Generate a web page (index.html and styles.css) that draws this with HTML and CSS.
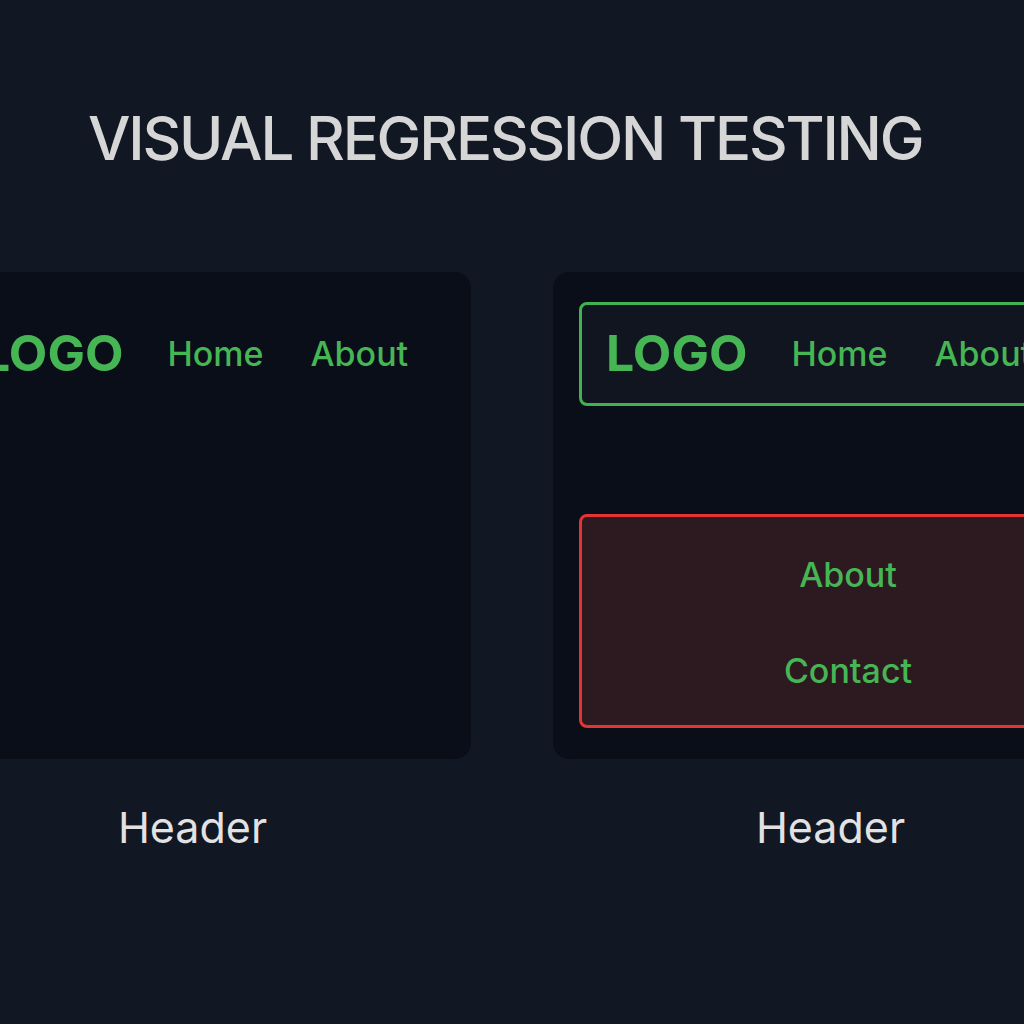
FILE: index.html
```html
<!DOCTYPE html>
<html>
<head>
<meta charset="utf-8">
<link rel="stylesheet" href="styles.css">
</head>
<body>
<main class="page">
  <h1 class="title">VISUAL REGRESSION TESTING</h1>
  <section class="compare">
    <div class="column">
      <div class="card">
        <nav class="nav nav-plain">
          <span class="logo">LOGO</span>
          <span class="link">Home</span>
          <span class="link">About</span>
        </nav>
      </div>
      <div class="label label-a">Header</div>
    </div>
    <div class="column">
      <div class="card">
        <nav class="nav nav-ok">
          <span class="logo">LOGO</span>
          <span class="link">Home</span>
          <span class="link">About</span>
        </nav>
        <div class="diff">
          <span class="link">About</span>
          <span class="link">Contact</span>
        </div>
      </div>
      <div class="label label-b">Header</div>
    </div>
  </section>
</main>
</body>
</html>
```

FILE: styles.css
```css
html, body {
  margin: 0;
  padding: 0;
  background: #111723;
  overflow: hidden;
}
body {
  width: 1024px;
  height: 1024px;
  font-family: Inter, "Noto Sans", sans-serif;
}
.page {
  display: flex;
  flex-direction: column;
}
.title {
  margin: 0;
  padding: 104px 0 0 88px;
  height: 170px;
  box-sizing: border-box;
  font-size: 60px;
  font-weight: 500;
  line-height: 1.15;
  color: #d6d6d6;
  white-space: nowrap;
  letter-spacing: -2.2px;
}
.compare {
  display: flex;
  gap: 82px;
  margin-left: -71px;
  margin-top: 102px;
}
.column {
  display: flex;
  flex-direction: column;
  align-items: center;
  width: 542px;
  flex-shrink: 0;
}
.card {
  width: 542px;
  height: 487px;
  box-sizing: border-box;
  background: #0a0e19;
  border-radius: 16px;
  padding: 30px 26px;
  display: flex;
  flex-direction: column;
}
.nav {
  display: flex;
  align-items: center;
  gap: 44px;
  height: 104px;
  box-sizing: border-box;
  padding-left: 24px;
  padding-bottom: 2px;
  border: 3px solid transparent;
  border-radius: 8px;
}
.nav .link + .link {
  margin-left: 3px;
}
.nav-ok {
  border-color: #3fb44e;
  background: #10151f;
  width: 600px;
  flex-shrink: 0;
}
.logo {
  font-size: 50px;
  font-weight: 700;
  color: #46b655;
  letter-spacing: 0;
}
.link {
  font-size: 34px;
  font-weight: 500;
  color: #46b655;
}
.diff {
  margin-top: 108px;
  width: 600px;
  height: 214px;
  box-sizing: border-box;
  border: 3px solid #e63434;
  border-radius: 8px;
  background: #2d1a21;
  display: flex;
  flex-direction: column;
  align-items: flex-start;
  padding-left: 191px;
  padding-top: 38px;
  gap: 56px;
}
.diff .link {
  display: block;
  width: 150px;
  text-align: center;
  line-height: 40px;
}
.label {
  margin-top: 42px;
  font-size: 43px;
  font-weight: 400;
  color: #e2e2e2;
}
.label-a {
  margin-right: 15px;
}
.label-b {
  margin-left: 13px;
}
```
